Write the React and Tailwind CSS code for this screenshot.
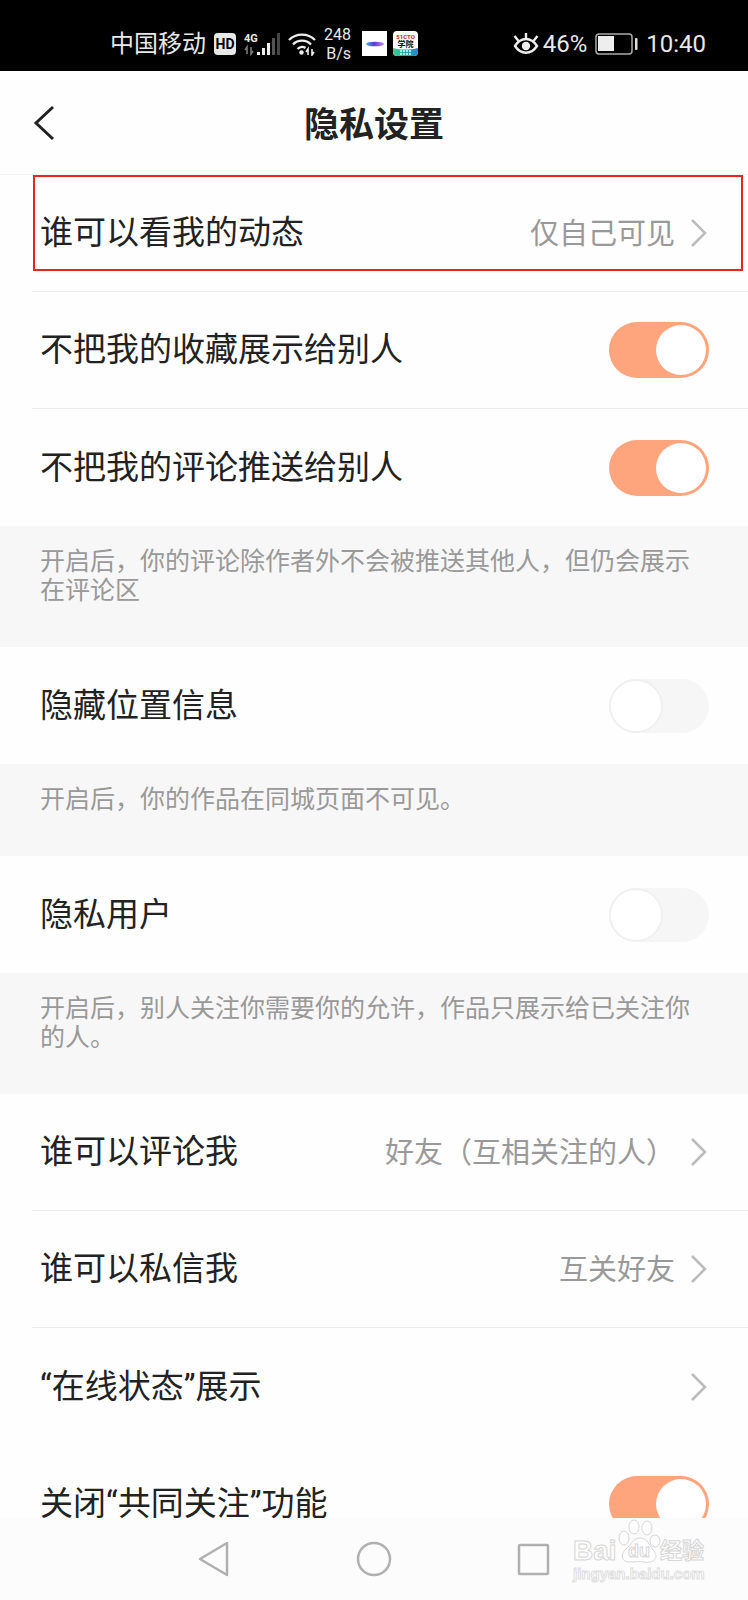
import { useState } from 'react'

const NOTES = {
  comment: '开启后，你的评论除作者外不会被推送其他人，但仍会展示在评论区',
  location: '开启后，你的作品在同城页面不可见。',
  privateUser: '开启后，别人关注你需要你的允许，作品只展示给已关注你的人。',
}

function SignalIcon() {
  return (
    <svg className="w-10 h-6 shrink-0" viewBox="0 0 40 24" aria-hidden="true">
      <text x="0" y="10" fill="#e8e8e8" fontSize="11" fontWeight="700" fontFamily="Roboto, sans-serif">4G</text>
      <path d="M3 22v-7l-2 3M7 15v7l2-3" fill="none" stroke="#777" strokeWidth="1.6" />
      <rect x="13" y="20" width="3" height="3" fill="#eee" />
      <rect x="18" y="16" width="3" height="7" fill="#eee" />
      <rect x="23" y="11" width="3" height="12" fill="#eee" />
      <rect x="28" y="6" width="3" height="17" fill="#555" />
      <rect x="33" y="1" width="3" height="22" fill="#444" />
    </svg>
  )
}

function WifiIcon() {
  return (
    <svg className="w-7 h-6 shrink-0" viewBox="0 0 28 24" fill="none" stroke="#eee" strokeWidth="2.4" aria-hidden="true">
      <path d="M1 8a18.500 18.500 0 0 1 26 0" />
      <path d="M5 12.500a12.500 12.500 0 0 1 18 0" />
      <path d="M9.500 17a6.500 6.500 0 0 1 8-1" />
      <circle cx="13.500" cy="20.500" r="2.200" fill="#eee" stroke="none" />
      <path d="M20 23v-6l-2 3M24 17v6l2-3" strokeWidth="1.6" />
    </svg>
  )
}

function EyeIcon() {
  return (
    <svg className="w-[26px] h-6 shrink-0" viewBox="0 0 26 24" fill="none" stroke="#eee" strokeWidth="2.4" aria-hidden="true">
      <path d="M2 14c6-9.300 16-9.300 22 0c-6 9-16 9-22 0z" />
      <path d="M13 7V1M5.500 9L1.500 4M20.500 9l4-5" />
      <circle cx="13" cy="14" r="4.200" fill="#eee" stroke="none" />
    </svg>
  )
}

function BatteryIcon() {
  return (
    <svg className="w-[43px] h-[22px] shrink-0" viewBox="0 0 43 22" aria-hidden="true">
      <rect x="1" y="1" width="36" height="20" rx="3" fill="none" stroke="#aaa" strokeWidth="1.500" />
      <rect x="3" y="3" width="16" height="15" fill="#eee" />
      <rect x="40" y="5" width="2.500" height="12" rx="1" fill="#ddd" />
    </svg>
  )
}

function AppIcons() {
  return (
    <svg className="w-14 h-[25px] shrink-0" viewBox="0 0 56 25" aria-hidden="true">
      <defs>
        <linearGradient id="oval" x1="0" x2="1">
          <stop offset="0" stopColor="#3fb6ee" />
          <stop offset="0.45" stopColor="#5a39cf" />
          <stop offset="1" stopColor="#c08cf0" />
        </linearGradient>
        <linearGradient id="wave" x1="0" x2="1">
          <stop offset="0" stopColor="#3ccb8c" />
          <stop offset="1" stopColor="#1f86cf" />
        </linearGradient>
      </defs>
      <rect width="25" height="25" fill="#fff" />
      <ellipse cx="13" cy="13" rx="9" ry="2.300" fill="url(#oval)" />
      <rect x="31" width="25" height="25" rx="4" fill="#fff" />
      <path d="M31 17c8 2 17 2 25 0v4a4 4 0 0 1-4 4H35a4 4 0 0 1-4-4z" fill="url(#wave)" />
      <text x="43.500" y="8" textAnchor="middle" fill="#d8352e" fontSize="6" fontWeight="900" fontFamily="Roboto, sans-serif">51CTO</text>
      <text x="43.500" y="16" textAnchor="middle" fill="#111" fontSize="8" fontWeight="700" fontFamily="'Noto Sans CJK SC', sans-serif">学院</text>
      <path d="M38 20h11M38 23h11" stroke="#d9fff2" strokeWidth="1.500" strokeDasharray="2 1" />
    </svg>
  )
}

function StatusBar() {
  return (
    <div className="flex items-center justify-between bg-black text-[#e8e8e8] h-[71px] shrink-0 pt-4 pl-[110px] pr-[42px]">
      <div className="flex items-center">
        <span className="text-2xl">中国移动</span>
        <span className="ml-2 flex h-[22px] w-[22px] items-center justify-center rounded bg-[#e8e8e8] text-sm font-bold text-black">
          HD
        </span>
        <span className="ml-2 flex items-center gap-1">
          <SignalIcon />
          <WifiIcon />
        </span>
        <span className="ml-2 text-right text-base leading-[19px]">
          248
          <br />
          B/s
        </span>
        <span className="ml-[11px] flex">
          <AppIcons />
        </span>
      </div>
      <div className="flex items-center text-2xl">
        <EyeIcon />
        <span className="ml-1">46%</span>
        <span className="ml-2 mr-2 flex">
          <BatteryIcon />
        </span>
        <span>10:40</span>
      </div>
    </div>
  )
}

function Header() {
  return (
    <header className="grid h-[104px] shrink-0 grid-cols-[1fr_auto_1fr] items-center border-b border-[#f4f4f4] px-8">
      <button type="button" aria-label="返回" className="flex h-10 w-10 items-center">
        <svg className="w-6 h-9" viewBox="0 0 24 36" fill="none" stroke="#222" strokeWidth="3" aria-hidden="true">
          <path d="M21 2L4 18l17 16" />
        </svg>
      </button>
      <h1 className="pt-2 text-[35px] font-bold text-[#222]">隐私设置</h1>
    </header>
  )
}

function Row({ divider, children }) {
  return (
    <div className={`ml-8 flex h-[117px] items-center pl-2 ${divider ? 'border-b border-[#ececec]' : ''}`}>
      {children}
    </div>
  )
}

function LinkRow({ label, value, divider, highlight }) {
  return (
    <div className="relative">
      <Row divider={divider}>
        <button type="button" className="flex h-full flex-1 items-center pr-10 text-left">
          <span className="flex-1 text-[33px] leading-10 text-[#222]">{label}</span>
          <span className="pt-0.5 text-[29px] leading-10 text-[#999]">{value}</span>
          <svg className="ml-4 h-7 w-[17px]" viewBox="0 0 17 28" fill="none" stroke="#bbb" strokeWidth="2.500" aria-hidden="true">
            <path d="M1 1l13 13L1 27" />
          </svg>
        </button>
      </Row>
      {highlight && (
        <div className="pointer-events-none absolute bottom-[21px] left-[33px] right-[5px] top-0 border-2 border-[#e6291f]" />
      )}
    </div>
  )
}

function ToggleRow({ label, defaultOn = false, divider }) {
  const [on, setOn] = useState(defaultOn)

  return (
    <Row divider={divider}>
      <label className="flex h-full flex-1 items-center justify-between pr-[39px]">
        <span className="text-[33px] leading-10 text-[#222]">{label}</span>
        <input
          type="checkbox"
          role="switch"
          checked={on}
          onChange={(e) => setOn(e.target.checked)}
          className="flex h-[54px] w-[100px] appearance-none items-center rounded-full bg-[#f6f6f6] before:h-[54px] before:w-[54px] before:rounded-full before:border-2 before:border-[#f0f0f0] before:bg-white before:content-[''] checked:h-14 checked:justify-end checked:bg-[#ffa57d] checked:pr-[3px] checked:before:h-[50px] checked:before:w-[50px] checked:before:border-0"
        />
      </label>
    </Row>
  )
}

function Note({ children }) {
  return (
    <p className="bg-[#f7f7f7] px-10 pt-[21px] pb-[42px] text-[25px] leading-[29px] text-[#999]">{children}</p>
  )
}

function Watermark() {
  return (
    <svg className="pointer-events-none absolute -top-1 right-9 h-[76px] w-[142px]" viewBox="0 0 142 76" fill="#fff" stroke="#d6d6d6" strokeWidth="1" aria-hidden="true">
      <text x="3" y="46" fontSize="28" fontWeight="700" fontFamily="'Liberation Sans', sans-serif">Bai</text>
      <ellipse cx="54" cy="24" rx="5" ry="7" />
      <ellipse cx="64" cy="13" rx="5" ry="7" />
      <ellipse cx="77" cy="14" rx="5" ry="7" />
      <ellipse cx="85" cy="27" rx="5" ry="6" />
      <path d="M70 24c-7 0-9 7-14 11c-5 4-6 13 4 13c6 0 9-1 14 0c10 2 15-5 10-11c-5-5-6-13-14-13z" />
      <text x="69" y="43" textAnchor="middle" fontSize="18" fontWeight="700" fontFamily="'Liberation Sans', sans-serif">du</text>
      <text x="90" y="44" fontSize="22" fontWeight="700" fontFamily="'Noto Sans CJK SC', sans-serif">经验</text>
      <text x="3" y="65" fontSize="15" stroke="#dedede" fontWeight="700" fontFamily="'Liberation Sans', sans-serif">jingyan.baidu.com</text>
    </svg>
  )
}

function NavBar() {
  return (
    <nav className="relative h-[82px] shrink-0 bg-[#fcfcfc]">
      <div className="mx-auto grid h-full w-[64%] grid-cols-3 place-items-center">
        <button type="button" aria-label="后退">
          <svg className="h-9 w-9" viewBox="0 0 36 36" fill="none" stroke="#b0b0b0" strokeWidth="2.500" strokeLinejoin="round" aria-hidden="true">
            <path d="M4 18L31 2v32z" />
          </svg>
        </button>
        <button type="button" aria-label="主页">
          <svg className="h-9 w-9" viewBox="0 0 36 36" fill="none" stroke="#b0b0b0" strokeWidth="2.500" aria-hidden="true">
            <circle cx="18" cy="18" r="16" />
          </svg>
        </button>
        <button type="button" aria-label="最近任务">
          <svg className="h-9 w-9" viewBox="0 0 36 36" fill="none" stroke="#b0b0b0" strokeWidth="2.500" aria-hidden="true">
            <rect x="3" y="4" width="29" height="29" rx="1" />
          </svg>
        </button>
      </div>
      <Watermark />
    </nav>
  )
}

export default function App() {
  return (
    <div className="flex h-screen flex-col bg-[#fefefe] font-[Roboto,'Noto_Sans_CJK_SC',sans-serif]" lang="zh-CN">
      <StatusBar />
      <Header />
      <main className="flex-1 overflow-y-auto [scrollbar-width:none]">
        <LinkRow label="谁可以看我的动态" value="仅自己可见" divider highlight />
        <ToggleRow label="不把我的收藏展示给别人" defaultOn divider />
        <ToggleRow label="不把我的评论推送给别人" defaultOn />
        <Note>{NOTES.comment}</Note>
        <ToggleRow label="隐藏位置信息" />
        <Note>{NOTES.location}</Note>
        <ToggleRow label="隐私用户" />
        <Note>{NOTES.privateUser}</Note>
        <LinkRow label="谁可以评论我" value="好友（互相关注的人）" divider />
        <LinkRow label="谁可以私信我" value="互关好友" divider />
        <LinkRow label="“在线状态”展示" />
        <ToggleRow label="关闭“共同关注”功能" defaultOn />
      </main>
      <NavBar />
    </div>
  )
}
